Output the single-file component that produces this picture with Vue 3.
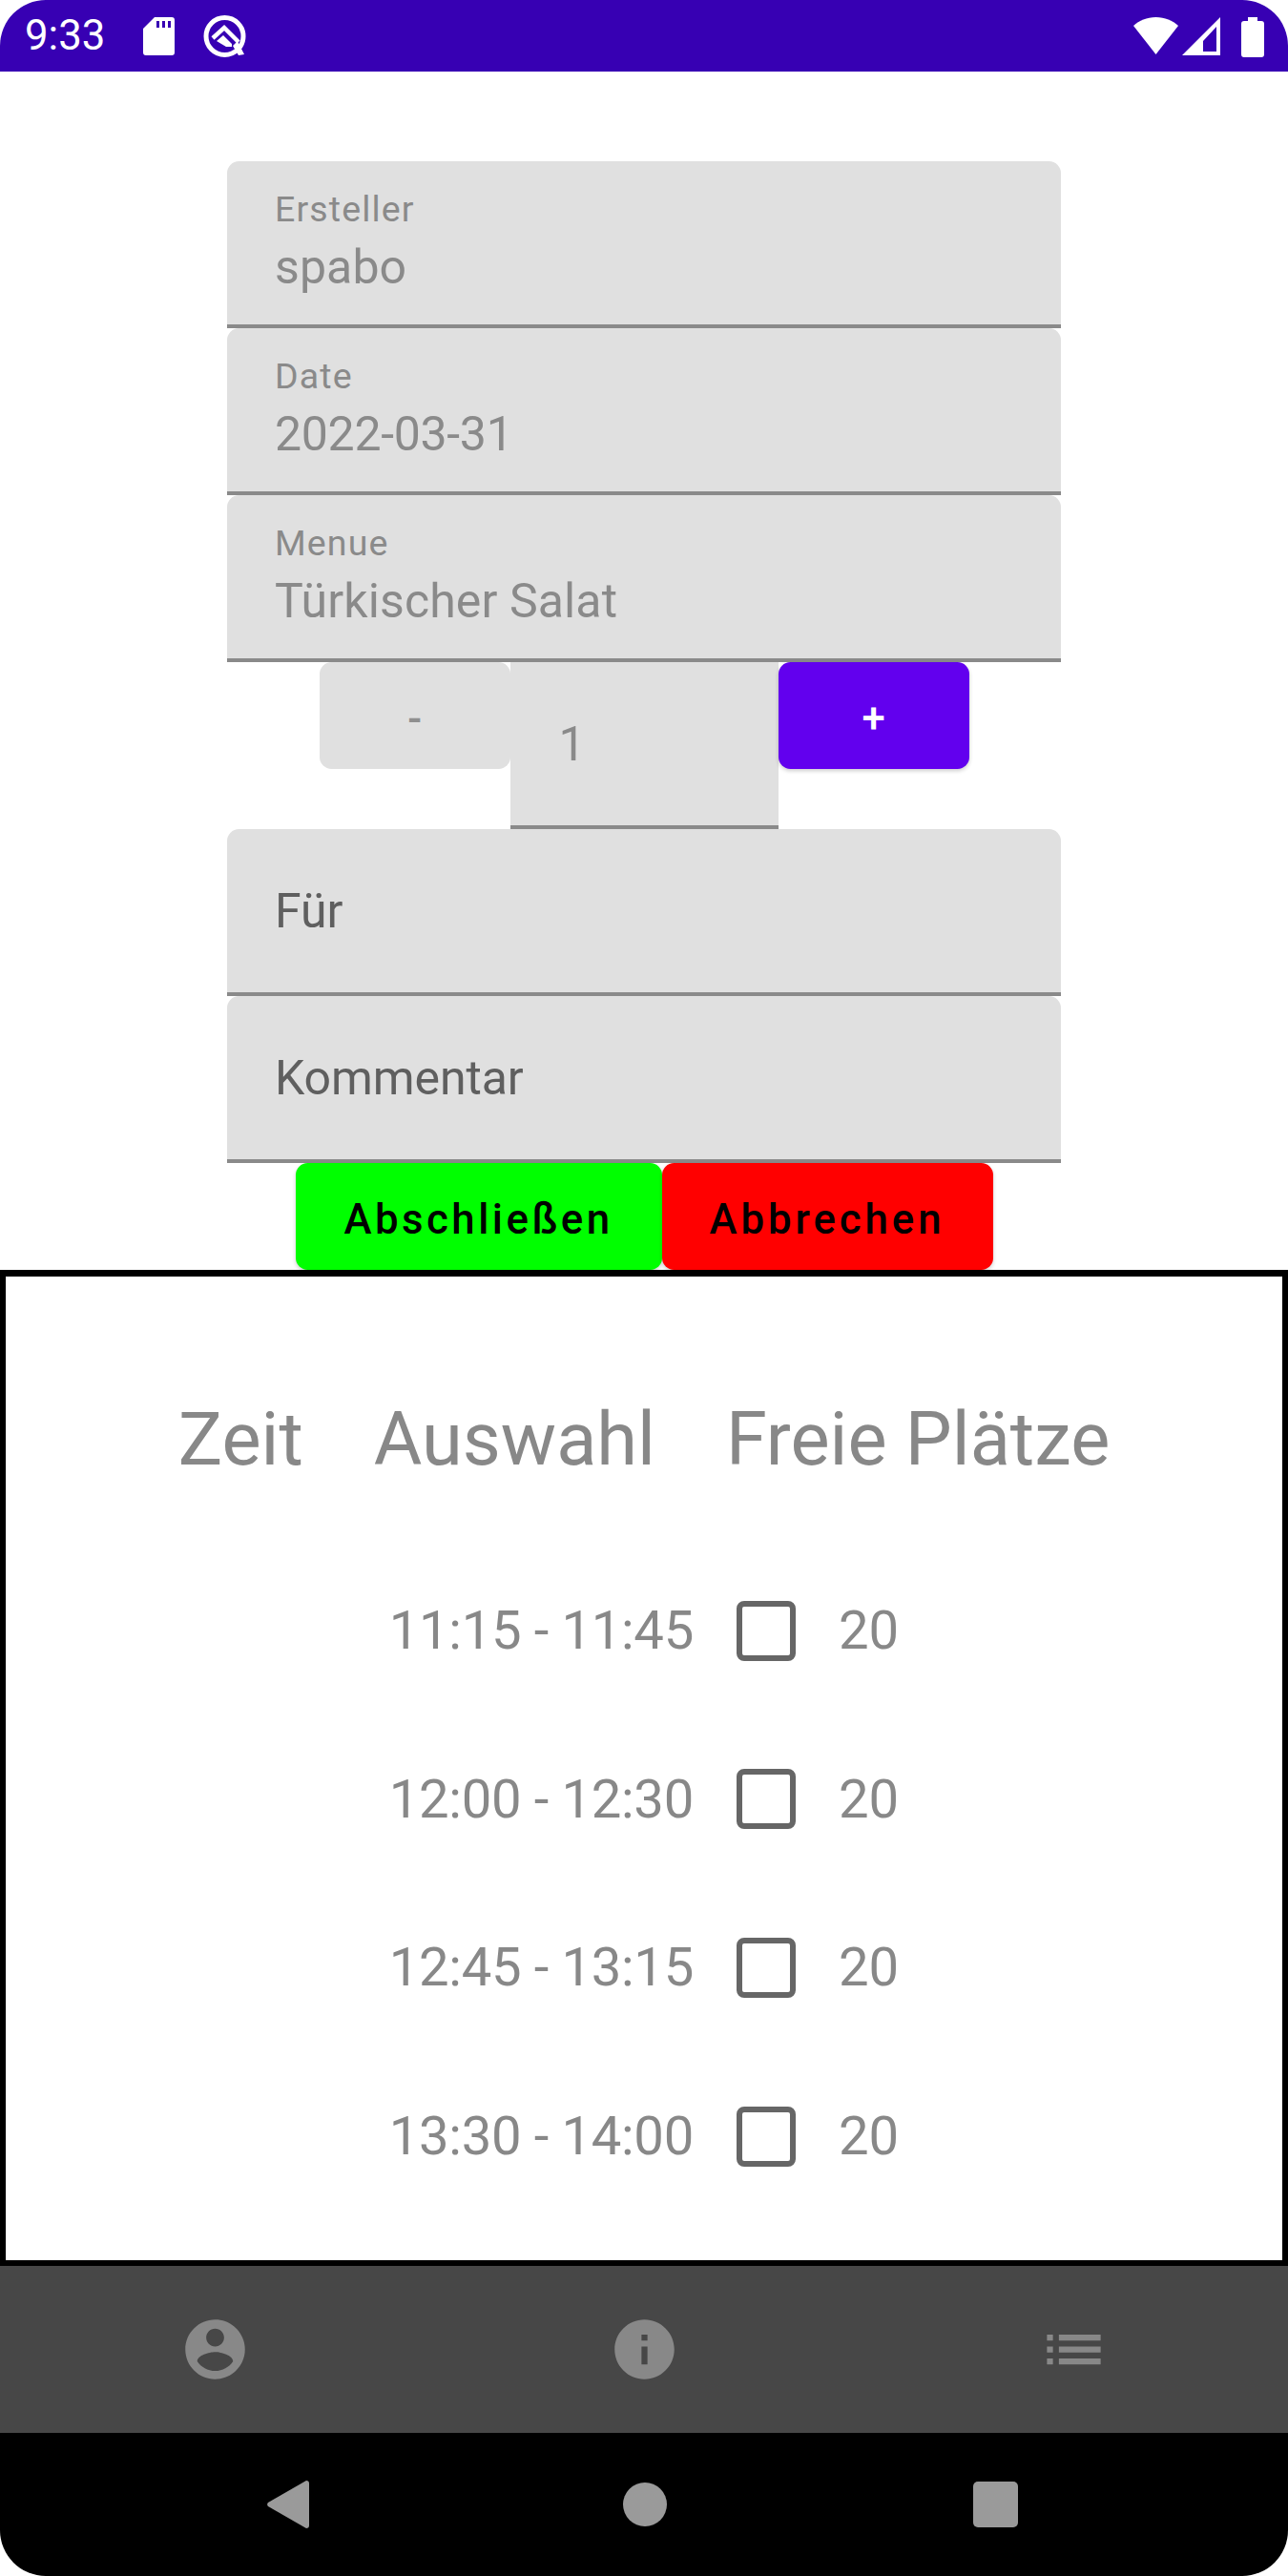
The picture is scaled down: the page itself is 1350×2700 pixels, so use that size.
<script setup>
const topFields = [
  { label: 'Ersteller', value: 'spabo' },
  { label: 'Date', value: '2022-03-31', digits: true },
  { label: 'Menue', value: 'Türkischer Salat' }
]
const hintFields = ['Für', 'Kommentar']
const slots = ['11:15 - 11:45', '12:00 - 12:30', '12:45 - 13:15', '13:30 - 14:00']
</script>

<template>
  <div class="screen">
    <header class="status">
      <div class="status-group">
        <span class="clock">9:33</span>
        <svg class="sd" width="33" height="40" viewBox="0 0 33 40">
          <path fill="#fff" fill-rule="evenodd" d="M12 0h18a3 3 0 0 1 3 3v34a3 3 0 0 1-3 3H3a3 3 0 0 1-3-3V12zM14 4v7h3V4zM20 4v7h3V4zM26 4v7h3V4z" />
        </svg>
        <svg class="q" width="45" height="44" viewBox="0 0 45 44">
          <circle cx="22.5" cy="22" r="19.5" fill="none" stroke="#fff" stroke-width="5" />
          <path fill="none" stroke="#fff" stroke-width="4.5" d="M10 24 22 13 37 28" />
          <path fill="#fff" d="M14 27l7-6 9 9v3h-6zM31 32l5-5 7 14-6 1z" />
        </svg>
      </div>
      <div class="status-group right">
        <svg width="47" height="39" viewBox="0 0 47 39">
          <path fill="#fff" d="M23.5 0C14 0 6 3.500 0 9l23.500 30L47 9C41 3.500 33 0 23.500 0z" />
        </svg>
        <svg width="40" height="40" viewBox="0 0 40 40">
          <path fill="#fff" fill-rule="evenodd" d="M40 0v40H0zM36 10 22 25v11h14z" />
        </svg>
        <svg class="battery" width="24" height="42" viewBox="0 0 24 42">
          <path fill="#fff" d="M7 0h10v4h4a3 3 0 0 1 3 3v32a3 3 0 0 1-3 3H3a3 3 0 0 1-3-3V7a3 3 0 0 1 3-3h4z" />
        </svg>
      </div>
    </header>

    <main class="form">
      <div v-for="f in topFields" :key="f.label" class="field">
        <span class="field-label">{{ f.label }}</span>
        <span class="field-value" :class="{ digits: f.digits }">{{ f.value }}</span>
      </div>

      <div class="stepper">
        <button class="btn btn-off">-</button>
        <div class="amount">1</div>
        <button class="btn btn-plus">+</button>
      </div>

      <div v-for="h in hintFields" :key="h" class="field hint">{{ h }}</div>

      <div class="actions">
        <button class="btn btn-ok">Abschließen</button>
        <button class="btn btn-cancel">Abbrechen</button>
      </div>
    </main>

    <section class="table">
      <div class="table-head">
        <span>Zeit</span>
        <span>Auswahl</span>
        <span>Freie Plätze</span>
      </div>
      <div v-for="s in slots" :key="s" class="slot">
        <span class="slot-time">{{ s }}</span>
        <span class="check"></span>
        <span>20</span>
      </div>
    </section>

    <nav class="tabs">
      <svg width="75" height="75" viewBox="0 0 24 24">
        <path d="M12 2C6.480 2 2 6.480 2 12s4.480 10 10 10 10-4.480 10-10S17.520 2 12 2zm0 3c1.660 0 3 1.340 3 3s-1.340 3-3 3-3-1.340-3-3 1.340-3 3-3zm0 14.200c-2.500 0-4.710-1.280-6-3.220.03-1.990 4-3.080 6-3.080 1.990 0 5.970 1.090 6 3.080-1.290 1.940-3.500 3.220-6 3.220z" />
      </svg>
      <svg width="75" height="75" viewBox="0 0 24 24">
        <path d="M12 2C6.480 2 2 6.480 2 12s4.480 10 10 10 10-4.480 10-10S17.520 2 12 2zm1 15h-2v-6h2v6zm0-8h-2V7h2v2z" />
      </svg>
      <svg width="75" height="75" viewBox="0 0 24 24">
        <path d="M3 13h2v-2H3v2zm0 4h2v-2H3v2zm0-8h2V7H3v2zm4 4h14v-2H7v2zm0 4h14v-2H7v2zM7 7v2h14V7H7z" />
      </svg>
    </nav>

    <footer class="sysnav">
      <svg width="44" height="50" viewBox="0 0 44 50">
        <path d="M41 0a3 3 0 0 1 3 3v44a3 3 0 0 1-3 3L1 27a3 3 0 0 1 0-4z" />
      </svg>
      <svg class="home" width="46" height="46" viewBox="0 0 46 46">
        <circle cx="23" cy="23" r="23" />
      </svg>
      <svg width="47" height="48" viewBox="0 0 47 48">
        <rect width="47" height="48" rx="5" />
      </svg>
    </footer>
  </div>
</template>

<style scoped>
.screen {
  width: 1350px;
  height: 2700px;
  display: flex;
  flex-direction: column;
  background: #fff;
  border-radius: 48px;
  overflow: hidden;
  font-family: Roboto, sans-serif;
}

.status {
  height: 75px;
  flex: none;
  display: flex;
  justify-content: space-between;
  align-items: center;
  padding: 0 25px 0 26px;
  background: #3700b3;
}
.status-group {
  display: flex;
  align-items: center;
}
.status-group.right {
  gap: 4px;
}
.clock {
  width: 124px;
  color: #fff;
  font-size: 43.75px;
  line-height: 1;
}
.sd {
  margin-top: 1px;
}
.q {
  margin-left: 30px;
  margin-top: 1px;
}
.battery {
  margin-left: 18px;
  margin-top: 2px;
}

.form {
  height: 1256px;
  flex: none;
  display: flex;
  flex-direction: column;
  align-items: center;
  padding-top: 94px;
  box-sizing: border-box;
}
.field {
  width: 874px;
  height: 175px;
  flex: none;
  box-sizing: border-box;
  display: flex;
  flex-direction: column;
  padding: 22px 50px 0;
  background: #e0e0e0;
  border-bottom: 4px solid #8a8a8a;
  border-radius: 12.5px 12.5px 0 0;
  color: #8a8a8a;
}
.field-label {
  font-size: 37.5px;
  line-height: 56px;
  letter-spacing: 0.03em;
}
.field-value {
  font-size: 50px;
  line-height: 67px;
  letter-spacing: 0.1px;
}
.field-value.digits {
  letter-spacing: -0.3px;
}
.hint {
  justify-content: center;
  padding-top: 0;
  color: #5f5f5f;
  font-size: 50px;
  letter-spacing: -0.1px;
}

.stepper {
  display: flex;
  align-items: flex-start;
}
.amount {
  width: 281px;
  height: 175px;
  box-sizing: border-box;
  padding: 61px 0 0 51px;
  background: #e0e0e0;
  border-bottom: 4px solid #8a8a8a;
  color: #8a8a8a;
  font-size: 50px;
  line-height: 1;
}

.btn {
  width: 200px;
  height: 112px;
  flex: none;
  padding: 6px 46px 0 50px;
  border: 0;
  border-radius: 12.5px;
  font-family: inherit;
  font-size: 43.75px;
  font-weight: 500;
  letter-spacing: 0.08em;
  box-shadow: 0 2px 4px rgba(0, 0, 0, 0.2);
}
.btn-off {
  background: #e0e0e0;
  color: #8f8f8f;
  box-shadow: none;
}
.btn-plus {
  background: #6200ee;
  color: #fff;
}
.actions {
  display: flex;
}
.btn-ok,
.btn-cancel {
  padding: 6px 0 0;
  color: #000;
}
.btn-ok {
  width: 384px;
  background: #0f0;
}
.btn-cancel {
  width: 347px;
  background: #f00;
  letter-spacing: 0.09em;
}

.table {
  height: 1044px;
  flex: none;
  box-sizing: border-box;
  display: flex;
  flex-direction: column;
  align-items: center;
  border: 6px solid #000;
  border-top-width: 7px;
  color: #888;
}
.table-head {
  display: flex;
  gap: 74px;
  padding: 127px 0 0;
  height: 283px;
  box-sizing: border-box;
  font-size: 77.6px;
  line-height: 88px;
}
.slot {
  height: 176.6px;
  flex: none;
  display: flex;
  align-items: center;
  gap: 45px;
  font-size: 56.25px;
}
.slot-time {
  letter-spacing: -0.35px;
}
.check {
  width: 62px;
  height: 63px;
  box-sizing: border-box;
  border: 6px solid #666;
  border-radius: 8px;
}

.tabs {
  height: 175px;
  flex: none;
  display: flex;
  justify-content: space-around;
  align-items: center;
  background: #474747;
}
.tabs svg {
  fill: #888;
}

.sysnav {
  height: 150px;
  flex: none;
  display: flex;
  justify-content: space-between;
  align-items: center;
  padding: 0 283px 0 280px;
  background: #000;
}
.sysnav svg {
  fill: #9a9a9a;
}
.home {
  margin-left: 7px;
}
</style>
